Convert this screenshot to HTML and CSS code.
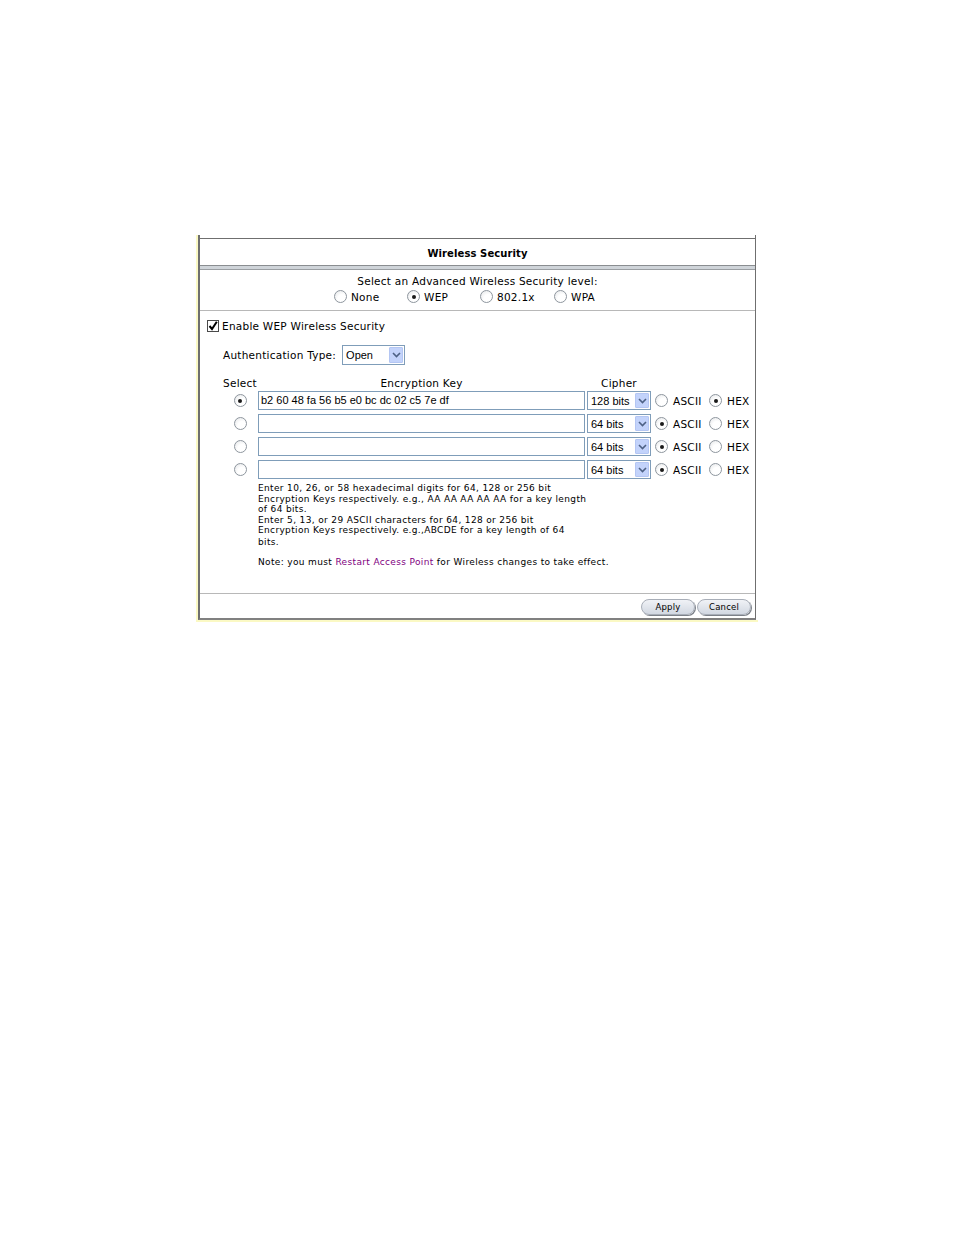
FILE: index.html
```html
<!DOCTYPE html>
<html>
<head>
<meta charset="utf-8">
<title>Wireless Security</title>
<link rel="stylesheet" href="styles.css">
</head>
<body>
<div class="frame">
  <div class="panel">
    <div class="title">Wireless Security</div>
    <div class="band"></div>
    <div class="levels">
      <div class="levels-label">Select an Advanced Wireless Security level:</div>
      <div class="levels-opts">
        <span class="opt"><span class="radio"></span>None</span>
        <span class="opt"><span class="radio on"></span>WEP</span>
        <span class="opt"><span class="radio"></span>802.1x</span>
        <span class="opt"><span class="radio"></span>WPA</span>
      </div>
    </div>
    <div class="wep">
      <div class="enable">
        <span class="check"><svg width="10" height="10" viewBox="0 0 10 10"><path d="M1.5 5 L4 8 L8.8 0.8" fill="none" stroke="#000" stroke-width="2"/></svg></span>Enable WEP Wireless Security
      </div>
      <div class="auth">
        <span class="auth-label">Authentication Type:</span>
        <div class="select sel-open"><span class="sel-text">Open</span><span class="sel-btn"><svg width="9" height="6" viewBox="0 0 9 6"><path d="M1 1 L4.5 4.5 L8 1" fill="none" stroke="#4d6185" stroke-width="1.6"/></svg></span></div>
      </div>
      <div class="keys keys-head">
        <div class="h-select">Select</div>
        <div class="h-key">Encryption Key</div>
        <div class="h-cipher">Cipher</div>
        <div></div>
        <div></div>
      </div>
      <div class="keys keys-rows">
        <div class="c-sel"><span class="radio on"></span></div>
        <div><div class="keyinput">b2 60 48 fa 56 b5 e0 bc dc 02 c5 7e df</div></div>
        <div><div class="select sel-bits"><span class="sel-text">128 bits</span><span class="sel-btn"><svg width="9" height="6" viewBox="0 0 9 6"><path d="M1 1 L4.5 4.5 L8 1" fill="none" stroke="#4d6185" stroke-width="1.6"/></svg></span></div></div>
        <div class="opt"><span class="radio"></span>ASCII</div>
        <div class="opt"><span class="radio on"></span>HEX</div>

        <div class="c-sel"><span class="radio"></span></div>
        <div><div class="keyinput"></div></div>
        <div><div class="select sel-bits"><span class="sel-text">64 bits</span><span class="sel-btn"><svg width="9" height="6" viewBox="0 0 9 6"><path d="M1 1 L4.5 4.5 L8 1" fill="none" stroke="#4d6185" stroke-width="1.6"/></svg></span></div></div>
        <div class="opt"><span class="radio on"></span>ASCII</div>
        <div class="opt"><span class="radio"></span>HEX</div>

        <div class="c-sel"><span class="radio"></span></div>
        <div><div class="keyinput"></div></div>
        <div><div class="select sel-bits"><span class="sel-text">64 bits</span><span class="sel-btn"><svg width="9" height="6" viewBox="0 0 9 6"><path d="M1 1 L4.5 4.5 L8 1" fill="none" stroke="#4d6185" stroke-width="1.6"/></svg></span></div></div>
        <div class="opt"><span class="radio on"></span>ASCII</div>
        <div class="opt"><span class="radio"></span>HEX</div>

        <div class="c-sel"><span class="radio"></span></div>
        <div><div class="keyinput"></div></div>
        <div><div class="select sel-bits"><span class="sel-text">64 bits</span><span class="sel-btn"><svg width="9" height="6" viewBox="0 0 9 6"><path d="M1 1 L4.5 4.5 L8 1" fill="none" stroke="#4d6185" stroke-width="1.6"/></svg></span></div></div>
        <div class="opt"><span class="radio on"></span>ASCII</div>
        <div class="opt"><span class="radio"></span>HEX</div>
      </div>
      <div class="help">
        <div>Enter 10, 26, or 58 hexadecimal digits for 64, 128 or 256 bit</div>
        <div>Encryption Keys respectively. e.g., AA AA AA AA AA for a key length</div>
        <div>of 64 bits.</div>
        <div>Enter 5, 13, or 29 ASCII characters for 64, 128 or 256 bit</div>
        <div>Encryption Keys respectively. e.g.,ABCDE for a key length of 64</div>
        <div class="last">bits.</div>
      </div>
      <div class="note">Note: you must <a class="link" href="#">Restart Access Point</a> for Wireless changes to take effect.</div>
    </div>
    <div class="footer">
      <button class="btn btn-apply">Apply</button>
      <button class="btn btn-cancel">Cancel</button>
    </div>
  </div>
</div>
</body>
</html>
```

FILE: styles.css
```css
html, body {
  margin: 0;
  padding: 0;
  background: #fff;
}
body {
  font-family: "DejaVu Sans", Verdana, sans-serif;
  font-size: 10.5px;
  letter-spacing: 0.25px;
  color: #000;
}
.frame {
  margin: 235px 0 0 196px;
  width: 560px;
  border-left: 2px solid #fbf9c4;
  border-bottom: 2px solid #fbf9c4;
}
.panel {
  width: 555px;
  padding-top: 3px;
  border-left: 2px solid #6f6f6f;
  border-right: 1px solid #6f6f6f;
  border-bottom: 2px solid #808080;
}
.title {
  border-top: 1px solid #6f6f6f;
  height: 26px;
  line-height: 29px;
  text-align: center;
  font-weight: bold;
  font-size: 10px;
  letter-spacing: 0.1px;
}
.band {
  height: 3px;
  background: #cfd4d9;
  border-top: 1px solid #8a8d90;
  border-bottom: 1px solid #9a9ea2;
}
.levels {
  padding: 4px 0 5px;
  border-bottom: 1px solid #b8b8b8;
}
.levels-label {
  text-align: center;
  line-height: 14px;
  height: 14px;
}
.levels-opts {
  display: grid;
  grid-template-columns: 73px 73px 74px 73px;
  padding-left: 134px;
  height: 17px;
  align-items: center;
}
.opt {
  display: flex;
  align-items: center;
}
.radio {
  display: inline-block;
  box-sizing: border-box;
  width: 13px;
  height: 13px;
  border-radius: 50%;
  border: 1px solid #8e969e;
  background: radial-gradient(circle at 65% 70%, #ffffff 40%, #e2e4e6 100%);
  margin-right: 4px;
  position: relative;
  flex: none;
}
.radio.on::after {
  content: "";
  position: absolute;
  left: 3.5px;
  top: 3.5px;
  width: 4px;
  height: 4px;
  border-radius: 50%;
  background: #1a1a1a;
}
.wep {
  padding: 7px 0 25px;
  border-bottom: 1px solid #b8b8b8;
}
.enable {
  height: 16px;
  display: flex;
  align-items: center;
  margin-left: 7px;
}
.check {
  box-sizing: border-box;
  width: 12px;
  height: 12px;
  border: 1px solid #4a4a4a;
  background: #fff;
  margin-right: 3px;
  display: flex;
  align-items: center;
  justify-content: center;
}
.auth {
  margin: 11px 0 0 23px;
  height: 20px;
  display: flex;
  align-items: center;
}
.auth-label {
  margin-right: 6px;
}
.select {
  box-sizing: border-box;
  display: flex;
  align-items: stretch;
  border: 1px solid #7f9db9;
  background: #fff;
  font-family: "Liberation Sans", Arial, sans-serif;
  font-size: 11px;
  letter-spacing: 0;
}
.sel-open {
  width: 63px;
  height: 20px;
}
.sel-bits {
  width: 64px;
  height: 19px;
}
.sel-text {
  flex: 1;
  padding-left: 3px;
  display: flex;
  align-items: center;
}
.sel-btn {
  width: 14px;
  margin: 1px;
  background: #c3d3fb;
  border: 1px solid #b4c6f3;
  border-radius: 1px;
  box-sizing: border-box;
  display: flex;
  align-items: center;
  justify-content: center;
}
.keys {
  display: grid;
  grid-template-columns: 35px 329px 68px 54px auto;
  margin-left: 23px;
}
.keys-head {
  margin-top: 11px;
  height: 14px;
  line-height: 14px;
}
.h-key {
  text-align: center;
  padding-right: 2px;
}
.h-cipher {
  text-align: center;
  width: 64px;
}
.keys-rows {
  margin-top: 1px;
  grid-auto-rows: 19px;
  row-gap: 4px;
  align-items: center;
}
.c-sel {
  display: flex;
  justify-content: center;
}
.c-sel .radio {
  margin: 0 1px 0 0;
}
.keys-rows .opt .radio {
  margin-right: 5px;
}
.keyinput {
  box-sizing: border-box;
  width: 327px;
  height: 19px;
  border: 1px solid #7f9db9;
  font-family: "Liberation Sans", Arial, sans-serif;
  font-size: 11px;
  letter-spacing: 0;
  line-height: 17px;
  padding-left: 2px;
  white-space: nowrap;
}
.help {
  margin: 4px 0 0 58px;
  font-size: 9px;
  letter-spacing: 0.35px;
  line-height: 10.5px;
}
.help .last {
  margin-top: 1.5px;
}
.note {
  margin: 8px 0 0 58px;
  font-size: 9px;
  letter-spacing: 0.35px;
  line-height: 12px;
}
.link {
  color: #800080;
  text-decoration: none;
}
.footer {
  height: 24px;
  box-sizing: border-box;
  padding: 5px 4px 0 0;
  display: flex;
  justify-content: flex-end;
  align-items: flex-start;
  gap: 2px;
}
.btn {
  height: 16px;
  box-sizing: border-box;
  padding: 0;
  border: 1px solid #a8aeb8;
  border-radius: 8px;
  background: linear-gradient(#f0f2f6, #d2d8e2);
  box-shadow: 1px 1px 0 #7c8189;
  font-family: "DejaVu Sans", Verdana, sans-serif;
  font-size: 8.5px;
  letter-spacing: 0.2px;
  color: #000;
  line-height: 14px;
}
.btn-apply {
  width: 54px;
}
.btn-cancel {
  width: 54px;
}
```
